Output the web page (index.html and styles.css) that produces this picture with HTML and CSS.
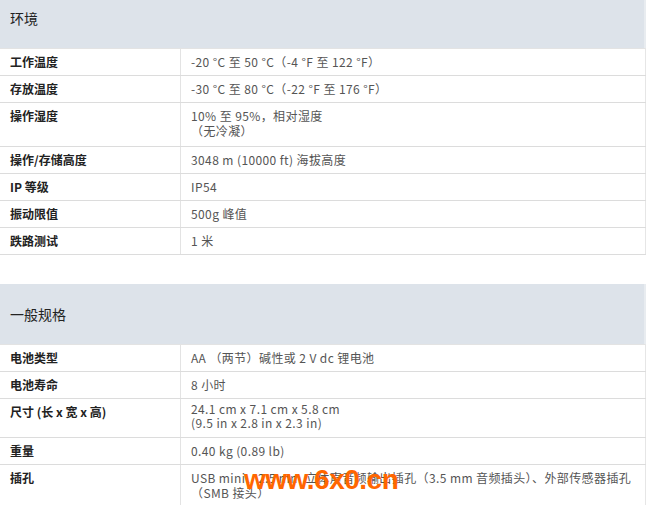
FILE: index.html
```html
<!DOCTYPE html>
<html lang="zh-CN">
<head>
    <meta charset="UTF-8">
    <meta name="viewport" content="width=device-width, initial-scale=1.0">
    <title>规格</title>
    <link rel="stylesheet" href="styles.css">
</head>
<body>

    <div class="specs">

        <div class="spec">
          <h3 class="spec-title">环境</h3>
          <table class="spec-table">
            <tr><th>工作温度</th><td>-20 °C 至 50 °C（-4 °F 至 122 °F）</td></tr>
            <tr><th>存放温度</th><td>-30 °C 至 80 °C（-22 °F 至 176 °F）</td></tr>
            <tr><th>操作湿度</th><td class="tall">10% 至 95%，相对湿度<br>（无冷凝）</td></tr>
            <tr><th>操作/存储高度</th><td>3048 m (10000 ft) 海拔高度</td></tr>
            <tr><th>IP 等级</th><td>IP54</td></tr>
            <tr><th>振动限值</th><td>500g 峰值</td></tr>
            <tr><th>跌路测试</th><td>1 米</td></tr>
          </table>
        </div>

        <div class="spec">
          <h3 class="spec-title">一般规格</h3>
          <table class="spec-table">
            <tr><th>电池类型</th><td>AA （两节）碱性或 2 V dc 锂电池</td></tr>
            <tr><th>电池寿命</th><td>8 小时</td></tr>
            <tr><th>尺寸 (长 x 宽 x 高)</th><td class="tight">24.1 cm x 7.1 cm x 5.8 cm<br>(9.5 in x 2.8 in x 2.3 in)</td></tr>
            <tr><th>重量</th><td>0.40 kg (0.89 lb)</td></tr>
            <tr><th>插孔</th><td>USB mini、2.5 mm 立体声音频输出插孔（3.5 mm 音频插头）、外部传感器插孔（SMB 接头）</td></tr>
          </table>
        </div>

    </div>

    <div class="mark">www.6x0.cn</div>

</body>
</html>
```

FILE: styles.css
```css
body, div, h3, table, th, td {
  margin: 0;
  padding: 0;
}

body {
  position: relative;
  background: #fff;
  color: #555;
  font: 12px/15px "Noto Sans CJK SC", "Noto Sans", sans-serif;
  overflow: hidden;
}

.specs {
  width: 646px;
  margin-top: -12px;
}

.spec {
  margin-bottom: 29px;
}

.spec-title {
  height: 60px;
  line-height: 60px;
  padding-left: 10px;
  background: #dde3ea;
  border-right: 2px solid #e8ecf0;
  color: #222;
  font-size: 14px;
  font-weight: 400;
}

.spec-table {
  width: 100%;
  border-collapse: collapse;
  table-layout: fixed;
  border-right: 1px solid #e6e6e6;
  border-top: 1px solid #e3e3e3;
}

.spec-table th,
.spec-table td {
  padding: 5px 10px 6px;
  border-bottom: 1px solid #dcdcdc;
  text-align: left;
  vertical-align: top;
}

.spec-table th {
  width: 160px;
  border-right: 1px solid #e3e3e3;
  color: #222;
  font-weight: 700;
}

.spec-table td {
  letter-spacing: 0.4px;
}

.spec-table td.tall {
  padding-bottom: 8px;
}

.spec-table td.tight {
  line-height: 14px;
  padding-top: 3px;
  padding-bottom: 7px;
}

.mark {
  position: absolute;
  left: 244px;
  top: 465px;
  color: #ff6600;
  font: 700 28px/30px "Liberation Sans", Arial, sans-serif;
  letter-spacing: -0.5px;
}
```
